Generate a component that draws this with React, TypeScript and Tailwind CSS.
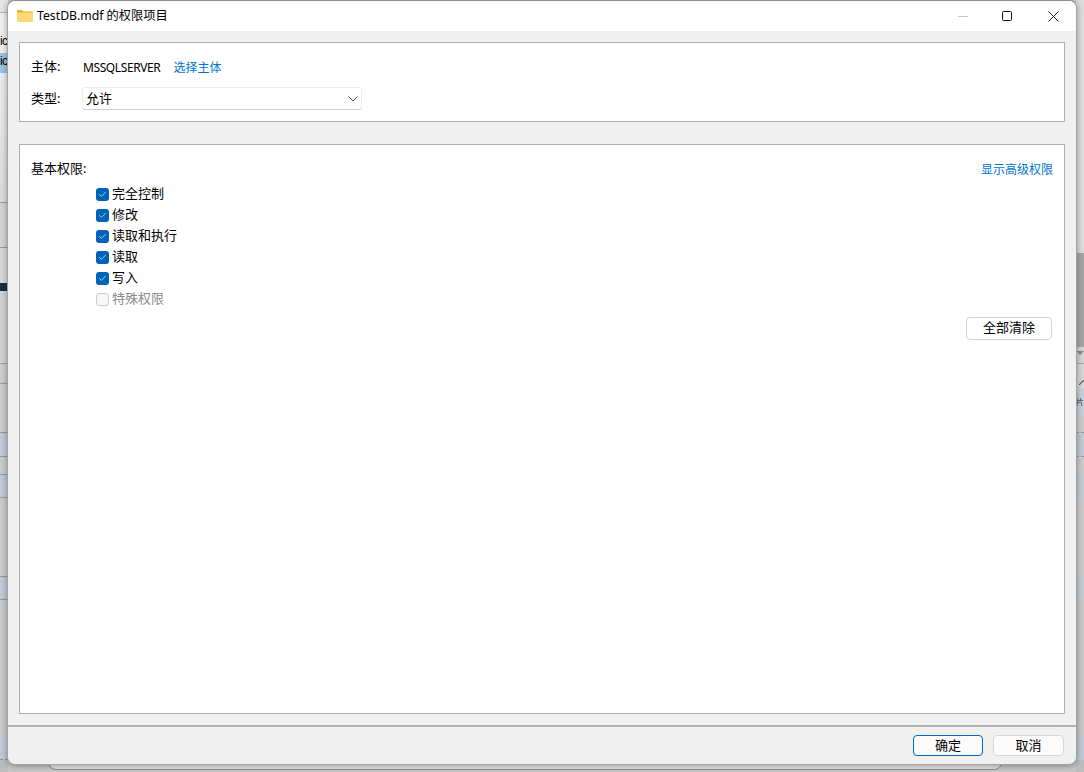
import { Check } from 'lucide-react';

const cjk = 'font-["Noto_Sans","Noto_Sans_CJK_SC",sans-serif]';

const permissions = [
  { label: '完全控制', checked: true },
  { label: '修改', checked: true },
  { label: '读取和执行', checked: true },
  { label: '读取', checked: true },
  { label: '写入', checked: true },
  { label: '特殊权限', checked: false },
];

function FolderIcon() {
  return (
    <svg width="16" height="12" viewBox="0 0 16 12">
      <path d="M0 1.2C0 .5.5 0 1.2 0h3.6l1.5 1.6H16V3H0z" fill="#f2b01e" />
      <path d="M0 2.6h15.2c.5 0 .8.3.8.8v7.4c0 .7-.5 1.2-1.2 1.2H1.2C.5 12 0 11.5 0 10.8z" fill="#fbd977" />
    </svg>
  );
}

function LeftStrip() {
  return (
    <div className="flex flex-col w-[8px] h-full overflow-hidden font-['Liberation_Sans',sans-serif] text-[12px] leading-[10px] tracking-[-0.6px] text-black">
      <div className="h-[13px] shrink-0 bg-[#e6e6e6] border-b border-[#b5b5b5]" />
      <div className="h-[22px] shrink-0 bg-[#f0f0f0]" />
      <div className="h-[18px] shrink-0 bg-[#f0f0f0] pt-[1px]">ic</div>
      <div className="h-[20px] shrink-0 bg-[#9dc3e2] pt-[3px]">ic</div>
      <div className="h-[129px] shrink-0 bg-gradient-to-b from-[#ececec] to-[#dcdcdc]" />
      <div className="h-[45px] shrink-0 bg-[#d4d4d4] border-t border-[#9c9c9c]" />
      <div className="h-[36px] shrink-0 bg-[#d8d8d8] border-t border-[#9c9c9c]" />
      <div className="h-[8px] shrink-0 bg-[#1f2a44]" />
      <div className="h-[72px] shrink-0 bg-[#d2d2d2]" />
      <div className="h-[20px] shrink-0 bg-[#cecece] border-t border-[#a0a0a0]" />
      <div className="h-[49px] shrink-0 bg-[#cccccc] border-t border-[#a0a0a0]" />
      <div className="h-[25px] shrink-0 bg-[#bfcbd6] border-t border-[#999999] border-b border-b-[#9a9a9a]" />
      <div className="h-[17px] shrink-0 bg-[#cbcbcb]" />
      <div className="h-[24px] shrink-0 bg-[#bfcbd6] border-t border-[#999999] border-b border-b-[#9a9a9a]" />
      <div className="h-[78px] shrink-0 bg-[#cbcbcb]" />
      <div className="h-[24px] shrink-0 bg-[#bfcbd6] border-t border-[#999999] border-b border-b-[#9a9a9a]" />
      <div className="h-[136px] shrink-0 bg-[#c9c9c9]" />
      <div className="h-[24px] shrink-0 bg-[#bfcbd6] border-b border-dashed border-[#8c8c8c]" />
      <div className="flex-1 bg-[#bdbdbd]" />
    </div>
  );
}

function RightStrip() {
  return (
    <div className="flex flex-col w-[8px] h-full overflow-hidden">
      <div className="h-[253px] shrink-0 bg-[#dcdcdc]" />
      <div className="h-[94px] shrink-0 bg-[#a6a6a6]" />
      <div className="h-[16px] shrink-0 bg-[#d4d4d4] flex justify-center pt-[4px]">
        <div className="w-0 h-0 border-x-[4px] border-x-transparent border-t-[4px] border-t-[#8a8a8a]" />
      </div>
      <div className="flex items-end justify-end h-[26px] shrink-0 bg-[#d6d6d6] border-t border-[#a8a8a8]">
        <svg width="5" height="5" viewBox="0 0 5 5" className="mb-[4px]">
          <path d="M0 5L5 0" stroke="#555555" strokeWidth="1.2" />
        </svg>
      </div>
      <div className="h-[26px] shrink-0 bg-[#c4d1dd] text-[8px] leading-[26px] text-[#333333] whitespace-nowrap">片</div>
      <div className="h-[17px] shrink-0 bg-[#cbcbcb]" />
      <div className="h-[25px] shrink-0 bg-[#bfcbd6] border-t border-[#999999] border-b border-dashed border-b-[#9a9a9a]" />
      <div className="h-[18px] shrink-0 bg-[#cbcbcb]" />
      <div className="h-[23px] shrink-0 bg-[#c0ccd6]" />
      <div className="h-[78px] shrink-0 bg-[#cbcbcb]" />
      <div className="h-[24px] shrink-0 bg-[#c0ccd6]" />
      <div className="h-[136px] shrink-0 bg-[#c9c9c9]" />
      <div className="h-[24px] shrink-0 bg-[#bfcbd6]" />
      <div className="flex-1 bg-[#bdbdbd]" />
    </div>
  );
}

function TitleBar() {
  return (
    <div className="flex items-center justify-between h-[30px] shrink-0 bg-white pl-[9px]">
      <div className="flex items-center gap-[4px]">
        <FolderIcon />
        <span className="text-[12.25px] text-black">TestDB.mdf 的权限项目</span>
      </div>
      <div className="flex items-center text-black">
        <div className="w-[46px] h-[30px] flex items-center justify-center pl-[3px]">
          <div className="w-[10px] h-px bg-[#c4c4c4]" />
        </div>
        <div className="w-[46px] h-[30px] flex items-center justify-center">
          <div className="w-[10px] h-[10px] border border-[#111111] rounded-[1.5px]" />
        </div>
        <div className="w-[46px] h-[30px] flex items-center justify-center">
          <svg width="11" height="11" viewBox="0 0 11 11" stroke="#1a1a1a" strokeWidth="1">
            <path d="M.5.5l10 10M10.5.5l-10 10" />
          </svg>
        </div>
      </div>
    </div>
  );
}

export default function App() {
  return (
    <div className={`relative w-[1084px] h-[772px] overflow-hidden bg-[#c8c8c8] ${cjk}`}>
      <div className="flex justify-between h-full">
        <LeftStrip />
        <RightStrip />
      </div>
      {/* window behind the dialog, only its lower edge shows */}
      <div className="absolute left-[48px] top-[600px] w-[954px] h-[170px] bg-[#e6e6e6] border border-[#8e8e8e] rounded-lg" />

      <div className="absolute left-[7px] top-0 w-[1070px] h-[765px] flex flex-col bg-[#f0f0f0] border border-[#a3a3a3] border-t-[#8c8c8c] rounded-lg overflow-hidden shadow-[0_1px_6px_rgba(0,0,0,0.35)]">
        <TitleBar />

        <div className="flex-1 flex flex-col px-[11px] pt-[11px]">
          <div className="h-[80px] shrink-0 bg-white border border-[#adadad] pl-[11px] text-[13px] text-black">
            <div className="flex items-center h-[20px] mt-[14px]">
              <span className="w-[52px]">主体:</span>
              <span className="text-[12px] tracking-[-0.4px] mt-px">MSSQLSERVER</span>
              <a className="ml-[13px] mt-[2px] text-[12px] text-[#0075d0]">选择主体</a>
            </div>
            <div className="flex items-center mt-[10px]">
              <span className="w-[51px]">类型:</span>
              <div className="flex items-center justify-between w-[280px] h-[23px] bg-white border border-[#ececec] border-b-[#cfcfcf] rounded-[3px] pl-[3px] pr-[3px]">
                <span>允许</span>
                <svg width="10" height="6" viewBox="0 0 10 6" fill="none" stroke="#555555" strokeWidth="1">
                  <path d="M.5.5L5 5 9.5.5" />
                </svg>
              </div>
            </div>
          </div>

          <div className="flex flex-col h-[570px] shrink-0 mt-[22px] bg-white border border-[#adadad] pl-[11px] pr-[11px] text-[13px] text-black">
            <div className="flex items-center justify-between h-[20px] mt-[14px]">
              <span>基本权限:</span>
              <a className="mt-[2px] text-[12px] text-[#0075d0]">显示高级权限</a>
            </div>
            <div className="flex flex-col ml-[65px] mt-[5px]">
              {permissions.map((p) => (
                <div key={p.label} className="flex items-center h-[21px] gap-[3px]">
                  {p.checked ? (
                    <div className="flex items-center justify-center w-[13px] h-[13px] rounded-[3px] bg-[#0063b8]">
                      <Check size={9} strokeWidth={2} color="#dfeaf5" />
                    </div>
                  ) : (
                    <div className="w-[13px] h-[13px] rounded-[3px] bg-[#f7f7f7] border border-[#cdcdcd]" />
                  )}
                  <span className={p.checked ? '-mt-[2px] text-black' : '-mt-[2px] text-[#8a8a8a]'}>{p.label}</span>
                </div>
              ))}
            </div>
            <div className="flex justify-end mt-[7px] pr-[1px]">
              <button className="w-[86px] h-[23px] pb-[2px] bg-white border border-[#d2d2d2] rounded-[4px]">全部清除</button>
            </div>
          </div>

          <div className="h-[2px] shrink-0 mt-[11px] -mx-[11px] bg-[#b4b4b4]" />

          <div className="flex justify-end gap-[10px] mt-[8px] mr-[1px] text-[13px] text-black">
            <button className="w-[70px] h-[21px] bg-[#fbfbfb] border border-[#0067c0] rounded-[4px]">确定</button>
            <button className="w-[71px] h-[21px] bg-[#fbfbfb] border border-[#d6d6d6] rounded-[4px]">取消</button>
          </div>
        </div>
      </div>
    </div>
  );
}
